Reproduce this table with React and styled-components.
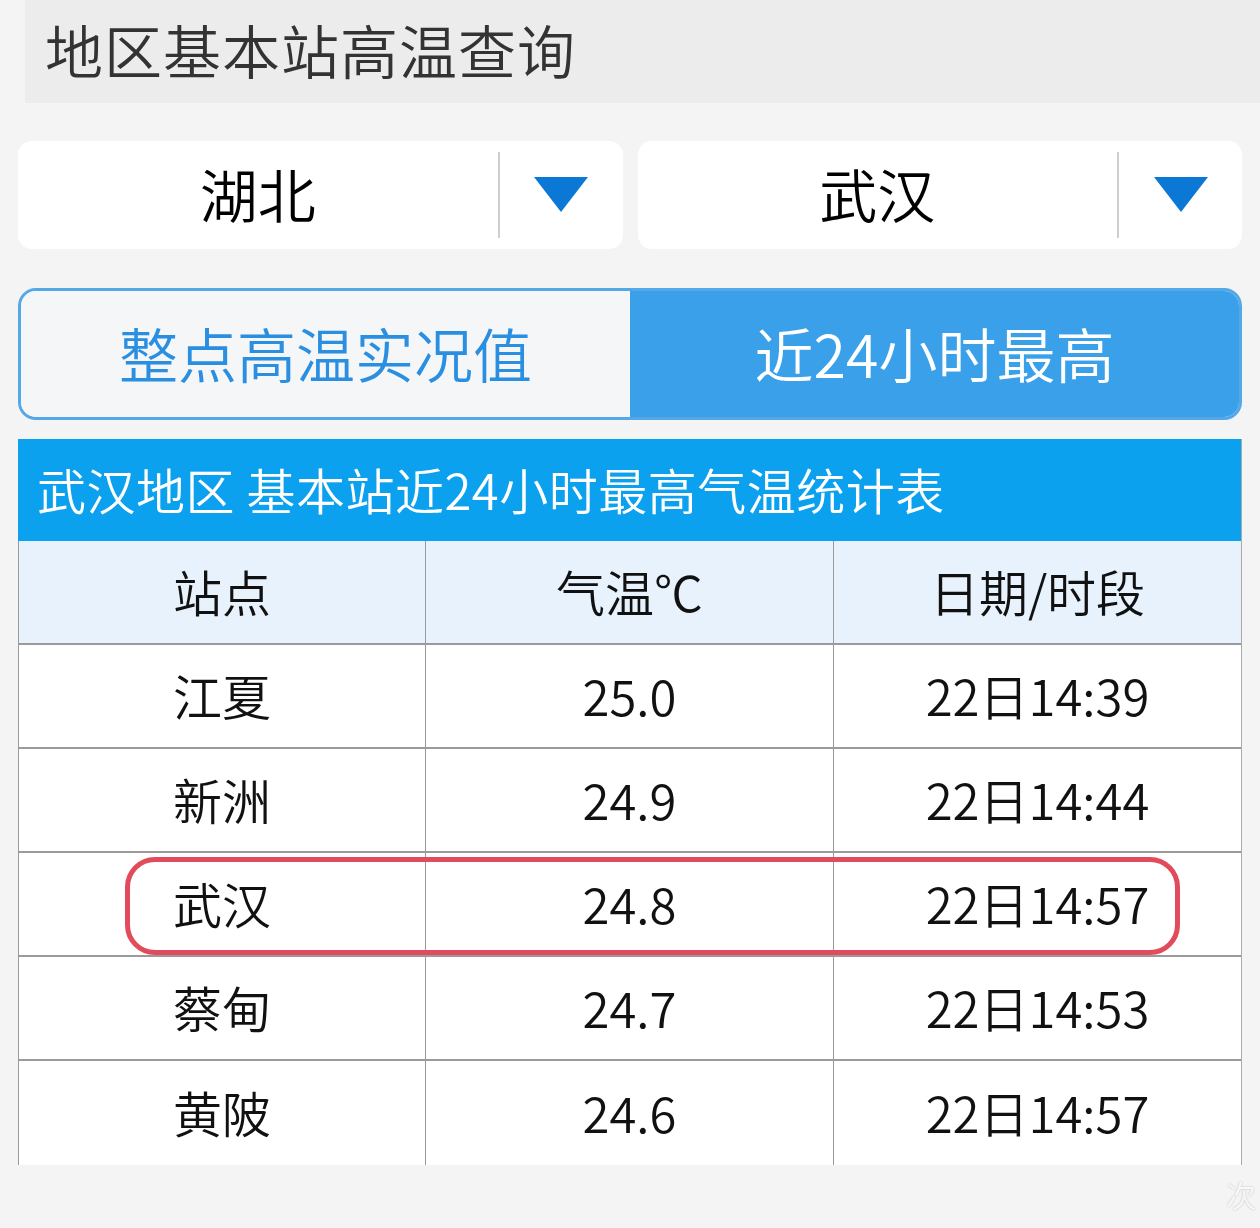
import styled, { createGlobalStyle } from "styled-components";

const GlobalStyle = createGlobalStyle`
  html, body {
    margin: 0;
    padding: 0;
    background: #f4f4f4;
  }
  body {
    font-family: "Noto Sans CJK SC", "Noto Sans", sans-serif;
    font-weight: 350;
    width: 1260px;
    height: 1228px;
    overflow: hidden;
  }
`;

const Page = styled.div`
  position: relative;
  display: flex;
  flex-direction: column;
  padding: 0 18px 0 18px;
  height: 1228px;
  box-sizing: border-box;
`;

const TitleBar = styled.div`
  height: 103px;
  margin: 0 -18px 0 7px;
  background: #ececec;
  padding-left: 20px;
  display: flex;
  align-items: center;
  font-size: 58px;
  color: #333;
  letter-spacing: 1px;
  padding-bottom: 6px;
  box-sizing: border-box;
`;

const SelectRow = styled.div`
  display: grid;
  grid-template-columns: 1fr 1fr;
  gap: 15px;
  margin-top: 38px;
`;

const Select = styled.div`
  height: 108px;
  background: #fff;
  border-radius: 14px;
  display: flex;
  align-items: center;
`;

const SelectText = styled.div`
  flex: 1;
  text-align: center;
  font-size: 58px;
  color: #000;
  padding-bottom: 4px;
`;

const SelectArrow = styled.div`
  width: 123px;
  height: 86px;
  border-left: 2px solid #cfcfcf;
  display: flex;
  align-items: center;
  justify-content: center;
`;

const Tabs = styled.div`
  margin-top: 39px;
  height: 132px;
  display: grid;
  grid-template-columns: 609px 1fr;
  border: 3px solid #55a8e8;
  border-radius: 18px;
  overflow: hidden;
  box-sizing: border-box;
`;

const Tab = styled.div`
  display: flex;
  align-items: center;
  justify-content: center;
  font-size: 59px;
  background: ${(p) => (p.$active ? "#3aa0ea" : "#f5f6f8")};
  color: ${(p) => (p.$active ? "#fff" : "#2a8fe0")};
  padding-bottom: 4px;
`;

const Table = styled.div`
  margin-top: 19px;
  display: flex;
  flex-direction: column;
  background: #fff;
  border-right: 1px solid #aaa;
`;

const Caption = styled.div`
  height: 102px;
  background: #0ba1ef;
  color: #fff;
  font-size: 49px;
  letter-spacing: 0.5px;
  display: flex;
  align-items: center;
  padding-left: 19px;
  padding-bottom: 4px;
  box-sizing: border-box;
  white-space: pre;
`;

const Row = styled.div`
  display: grid;
  grid-template-columns: 407px 408px 1fr;
  height: 104px;
  background: ${(p) => (p.$head ? "#e8f2fd" : "#fff")};
  border-bottom: ${(p) => (p.$last ? "none" : "2px solid #9a9a9a")};
  box-sizing: border-box;
`;

const Cell = styled.div`
  display: flex;
  align-items: center;
  justify-content: center;
  font-size: 49px;
  color: #111;
  border-left: 1px solid #9a9a9a;
  padding-bottom: 4px;
`;

const Highlight = styled.div`
  position: absolute;
  left: 125px;
  top: 857px;
  width: 1055px;
  height: 98px;
  border: 5px solid #e24b5b;
  border-radius: 30px;
  box-sizing: border-box;
  pointer-events: none;
`;

const Watermark = styled.div`
  position: absolute;
  left: 900px;
  right: 0;
  top: 1172px;
  height: 44px;
  display: flex;
  align-items: center;
  justify-content: flex-end;
  padding-right: 4px;
  color: rgba(255, 255, 255, 0.9);
  font-size: 30px;
  text-shadow: 0 0 2px rgba(0, 0, 0, 0.25);
`;

function Arrow() {
  return (
    <svg width="54" height="36" viewBox="0 0 54 36">
      <polygon points="0,0 54,0 27,35" fill="#0b78d6" />
    </svg>
  );
}

const rows = [
  ["江夏", "25.0", "22日14:39"],
  ["新洲", "24.9", "22日14:44"],
  ["武汉", "24.8", "22日14:57"],
  ["蔡甸", "24.7", "22日14:53"],
  ["黄陂", "24.6", "22日14:57"],
];

export default function App() {
  return (
    <>
      <GlobalStyle />
      <Page>
        <TitleBar>地区基本站高温查询</TitleBar>
        <SelectRow>
          <Select>
            <SelectText>湖北</SelectText>
            <SelectArrow>
              <Arrow />
            </SelectArrow>
          </Select>
          <Select>
            <SelectText>武汉</SelectText>
            <SelectArrow>
              <Arrow />
            </SelectArrow>
          </Select>
        </SelectRow>
        <Tabs>
          <Tab>整点高温实况值</Tab>
          <Tab $active>近24小时最高</Tab>
        </Tabs>
        <Table>
          <Caption>武汉地区 基本站近24小时最高气温统计表</Caption>
          <Row $head>
            <Cell>站点</Cell>
            <Cell>气温℃</Cell>
            <Cell>日期/时段</Cell>
          </Row>
          {rows.map((r, i) => (
            <Row key={i} $last={i === rows.length - 1}>
              {r.map((v, j) => (
                <Cell key={j}>{v}</Cell>
              ))}
            </Row>
          ))}
        </Table>
        <Highlight />
        <Watermark>次</Watermark>
      </Page>
    </>
  );
}
